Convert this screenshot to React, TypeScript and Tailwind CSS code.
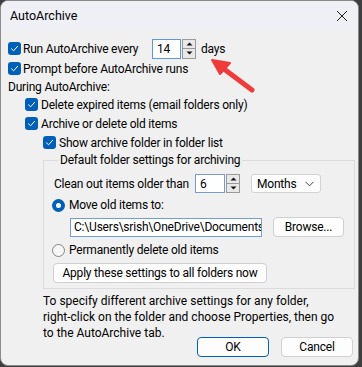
import React from 'react'

const font = { fontFamily: 'Roboto, "Noto Sans", "Liberation Sans", sans-serif' }

function Check() {
  return (
    <span className="flex h-[13px] w-[13px] shrink-0 items-center justify-center rounded-[3px] bg-[#005fb8]">
      <svg width="9" height="9" viewBox="0 0 9 9" fill="none">
        <path d="M1.5 4.8 L3.6 6.8 L7.6 2.3" stroke="white" strokeWidth="1" strokeLinecap="round" strokeLinejoin="round" />
      </svg>
    </span>
  )
}

function Radio({ on }: { on?: boolean }) {
  return on ? (
    <span className="flex h-[13px] w-[13px] shrink-0 items-center justify-center rounded-full bg-[#005fb8]">
      <span className="h-[5px] w-[5px] rounded-full bg-white" />
    </span>
  ) : (
    <span className="h-[13px] w-[13px] shrink-0 rounded-full border border-[#858585] bg-[#f6f6f6]" />
  )
}

function Spinner({ h }: { h: string }) {
  return (
    <div className={`ml-[1px] flex w-[14px] shrink-0 flex-col border border-[#9a9a9a] bg-[#e8e8e8] ${h}`}>
      <div className="flex flex-1 items-center justify-center border-b border-[#9a9a9a]">
        <svg width="7" height="4" viewBox="0 0 7 4">
          <path d="M0.5 3.5 L3.5 0.5 L6.5 3.5 Z" fill="#111" />
        </svg>
      </div>
      <div className="flex flex-1 items-center justify-center">
        <svg width="7" height="4" viewBox="0 0 7 4">
          <path d="M0.5 0.5 L3.5 3.5 L6.5 0.5 Z" fill="#111" />
        </svg>
      </div>
    </div>
  )
}

function Button({ children, w, primary }: { children: React.ReactNode; w: string; primary?: boolean }) {
  return (
    <div
      className={`flex h-[20px] shrink-0 items-center justify-center whitespace-nowrap rounded-[4px] bg-[#fdfdfd] ${w} ${
        primary ? 'border border-[#005fb8]' : 'border border-[#d0d0d0]'
      }`}
    >
      {children}
    </div>
  )
}

export default function App() {
  return (
    <div className="relative h-[367px] w-[362px] bg-[#3e3e3e] text-[12px] leading-[16px] text-black" style={font}>
      <div className="flex h-[366px] w-[359px] flex-col overflow-hidden whitespace-nowrap rounded-[8px] border border-[#8a8a8a] bg-[#f0f0f0]">
        {/* Title bar */}
        <div className="flex h-[30px] shrink-0 items-center justify-between bg-[#eff0f6] pl-[9px] pr-[6px]">
          <span className="text-[12.5px]">AutoArchive</span>
          <svg width="20" height="20" viewBox="0 0 20 20">
            <path d="M5 5 L15 15 M15 5 L5 15" stroke="#1a1a1a" strokeWidth="1" />
          </svg>
        </div>

        {/* Body */}
        <div className="flex flex-col pl-[7px] tracking-[-0.2px]">
          <div className="mt-[7px] flex h-[21px] items-center">
            <Check />
            <span className="ml-[2px] w-[129px] shrink-0">Run AutoArchive every</span>
            <div className="flex h-[20px] w-[29px] shrink-0 items-center border border-[#5a9ad8] bg-white pl-[4px]">14</div>
            <Spinner h="h-[20px]" />
            <span className="ml-[5px]">days</span>
          </div>
          <div className="flex h-[19px] items-center">
            <Check />
            <span className="ml-[2px]">Prompt before AutoArchive runs</span>
          </div>
          <div className="flex h-[17px] items-center">During AutoArchive:</div>
          <div className="ml-[17px] flex h-[19px] items-center">
            <Check />
            <span className="ml-[3px]">Delete expired items (email folders only)</span>
          </div>
          <div className="ml-[17px] flex h-[19px] items-center">
            <Check />
            <span className="ml-[3px]">Archive or delete old items</span>
          </div>
          <div className="ml-[35px] flex h-[19px] items-center">
            <Check />
            <span className="ml-[3px]">Show archive folder in folder list</span>
          </div>

          <fieldset className="ml-[35px] w-[312px] border border-[#dcdcdc] pb-[5px] pl-[8px]">
            <legend className="ml-[6px] px-[2px] leading-[16px]">Default folder settings for archiving</legend>
            <div className="mt-[6px] ml-[2px] flex h-[19px] items-center">
              <span className="w-[141px] shrink-0">Clean out items older than</span>
              <div className="flex h-[19px] w-[30px] shrink-0 items-center border border-[#7a9cc4] bg-white pl-[4px]">6</div>
              <Spinner h="h-[19px]" />
              <div className="ml-[11px] flex h-[19px] w-[70px] shrink-0 items-center justify-between rounded-[3px] border border-[#d3d3d3] bg-[#fdfdfd] pl-[5px] pr-[6px]">
                <span>Months</span>
                <svg width="9" height="6" viewBox="0 0 9 6">
                  <path d="M0.5 0.8 L4.5 4.8 L8.5 0.8" stroke="#444" strokeWidth="1" fill="none" />
                </svg>
              </div>
            </div>
            <div className="mt-[4px] flex h-[16px] items-center">
              <Radio on />
              <span className="ml-[4px]">Move old items to:</span>
            </div>
            <div className="mt-[4px] ml-[18px] flex h-[20px] items-center">
              <div className="flex h-[19px] w-[192px] shrink-0 items-center overflow-hidden border border-[#6f9fd4] bg-white pl-[3px]">
                C:\Users\srish\OneDrive\Documents\
              </div>
              <div className="ml-[11px]">
                <Button w="w-[71px]">Browse...</Button>
              </div>
            </div>
            <div className="mt-[5px] flex h-[16px] items-center">
              <Radio />
              <span className="ml-[4px]">Permanently delete old items</span>
            </div>
            <div className="mt-[5px] ml-[1px]">
              <Button w="w-[214px]">Apply these settings to all folders now</Button>
            </div>
          </fieldset>

          <p className="ml-[35px] mt-[4px] tracking-normal">
            To specify different archive settings for any folder,
            <br />
            right-click on the folder and choose Properties, then go
            <br />
            to the AutoArchive tab.
          </p>
          <div className="mt-[-4px] flex gap-[12px] pl-[189px]">
            <Button w="w-[72px]" primary>
              OK
            </Button>
            <Button w="w-[72px]">Cancel</Button>
          </div>
        </div>
      </div>

      {/* Red annotation arrow */}
      <svg className="absolute left-0 top-0" width="362" height="367" viewBox="0 0 362 367">
        <line x1="252" y1="90" x2="222" y2="67.5" stroke="#ef3b3b" strokeWidth="5" strokeLinecap="round" />
        <path d="M212 60 L230 63 L220 74 Z" fill="#ef3b3b" stroke="#ef3b3b" strokeWidth="2" strokeLinejoin="round" />
      </svg>
    </div>
  )
}
